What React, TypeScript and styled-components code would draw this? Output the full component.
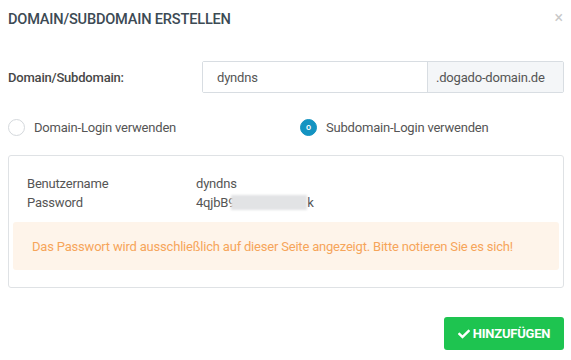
import styled, { createGlobalStyle } from 'styled-components';
import { FaCheck } from 'react-icons/fa';

const GlobalStyle = createGlobalStyle`
  body {
    margin: 0;
    background: #fff;
    font-family: Roboto, 'Liberation Sans', Arial, sans-serif;
    color: #555;
  }
`;

const Modal = styled.div`
  width: 571px;
  height: 360px;
  box-sizing: border-box;
  padding: 0 7px 0 8px;
`;

const Header = styled.div`
  display: flex;
  justify-content: space-between;
  align-items: flex-start;
  padding-top: 9px;
  height: 52px;
`;

const Title = styled.h4`
  margin: 0;
  font-size: 14.6px;
  line-height: 20px;
  font-weight: 500;
  letter-spacing: -0.2px;
  color: #3c4a54;
`;

const Close = styled.button`
  border: 0;
  background: none;
  padding: 0;
  margin: 3px 1px 0 0;
  font-family: inherit;
  font-size: 16px;
  line-height: 12px;
  color: #c8c8c8;
`;

const FormRow = styled.div`
  display: grid;
  grid-template-columns: 194px 1fr;
  align-items: center;
`;

const Label = styled.label`
  font-size: 13px;
  font-weight: 500;
  letter-spacing: -0.2px;
  color: #474747;
`;

const InputGroup = styled.div`
  display: flex;
  height: 32px;
  border: 1px solid #d8dde2;
  border-radius: 2px;
  box-sizing: border-box;
`;

const Input = styled.input`
  flex: 1;
  border: 0;
  outline: none;
  padding: 0 14px;
  font-family: inherit;
  font-size: 13px;
  letter-spacing: -0.2px;
  color: #555;
  background: #fff;
`;

const Addon = styled.span`
  display: flex;
  align-items: center;
  padding: 0 8px;
  width: 136px;
  box-sizing: border-box;
  border-left: 1px solid #d8dde2;
  background: #f4f6f8;
  font-size: 13px;
  letter-spacing: -0.2px;
  color: #555;
`;

const RadioRow = styled.div`
  display: grid;
  grid-template-columns: 292px 1fr;
  margin-top: 26px;
  height: 17px;
  align-items: center;
`;

const RadioItem = styled.div`
  display: flex;
  align-items: center;
  gap: 9px;
  font-size: 13px;
  letter-spacing: -0.2px;
  color: #555;
`;

const RadioCircle = styled.span<{ $checked?: boolean }>`
  display: inline-flex;
  align-items: center;
  justify-content: center;
  width: 17px;
  height: 17px;
  box-sizing: border-box;
  border-radius: 50%;
  border: 1px solid ${(p) => (p.$checked ? '#1493c1' : '#d4d8dc')};
  background: ${(p) => (p.$checked ? '#1493c1' : '#fff')};
  color: #fff;
  font-size: 9px;
  font-weight: 500;
  line-height: 1;
  padding-bottom: 1px;
`;

const Card = styled.div`
  margin-top: 19px;
  height: 133px;
  box-sizing: border-box;
  border: 1px solid #dfe2e5;
  border-radius: 3px;
  padding: 18px 4px 0;
`;

const InfoRow = styled.div`
  display: grid;
  grid-template-columns: 169px 1fr;
  padding-left: 14px;
  font-size: 13px;
  letter-spacing: -0.2px;
  line-height: 19px;
  color: #555;
`;

const Blur = styled.span`
  display: inline-block;
  width: 76px;
  height: 15px;
  margin-left: -4px;
  vertical-align: -3px;
  background: #e2e3e5;
  filter: blur(1px);
`;

const Alert = styled.div`
  margin-top: 10px;
  height: 48px;
  display: flex;
  align-items: center;
  padding: 0 19px;
  border-radius: 3px;
  background: #fef4ea;
  color: #f6a55a;
  font-size: 13px;
  letter-spacing: -0.2px;
`;

const Footer = styled.div`
  display: flex;
  justify-content: flex-end;
  margin-top: 29px;
`;

const SubmitButton = styled.button`
  display: flex;
  align-items: center;
  gap: 3px;
  height: 33px;
  width: 120px;
  justify-content: center;
  border: 0;
  border-radius: 3px;
  background: #1ec450;
  color: #fff;
  font-family: inherit;
  font-size: 13px;
  font-weight: 700;
  letter-spacing: -0.2px;
`;

export default function App() {
  return (
    <Modal>
      <GlobalStyle />
      <Header>
        <Title>DOMAIN/SUBDOMAIN ERSTELLEN</Title>
        <Close>×</Close>
      </Header>
      <FormRow>
        <Label>Domain/Subdomain:</Label>
        <InputGroup>
          <Input defaultValue="dyndns" />
          <Addon>.dogado-domain.de</Addon>
        </InputGroup>
      </FormRow>
      <RadioRow>
        <RadioItem>
          <RadioCircle />
          Domain-Login verwenden
        </RadioItem>
        <RadioItem>
          <RadioCircle $checked>o</RadioCircle>
          Subdomain-Login verwenden
        </RadioItem>
      </RadioRow>
      <Card>
        <InfoRow>
          <span>Benutzername</span>
          <span>dyndns</span>
        </InfoRow>
        <InfoRow>
          <span>Password</span>
          <span>
            4qjbB9
            <Blur />k
          </span>
        </InfoRow>
        <Alert>
          Das Passwort wird ausschließlich auf dieser Seite angezeigt. Bitte notieren Sie es sich!
        </Alert>
      </Card>
      <Footer>
        <SubmitButton>
          <FaCheck size={12} />
          HINZUFÜGEN
        </SubmitButton>
      </Footer>
    </Modal>
  );
}
